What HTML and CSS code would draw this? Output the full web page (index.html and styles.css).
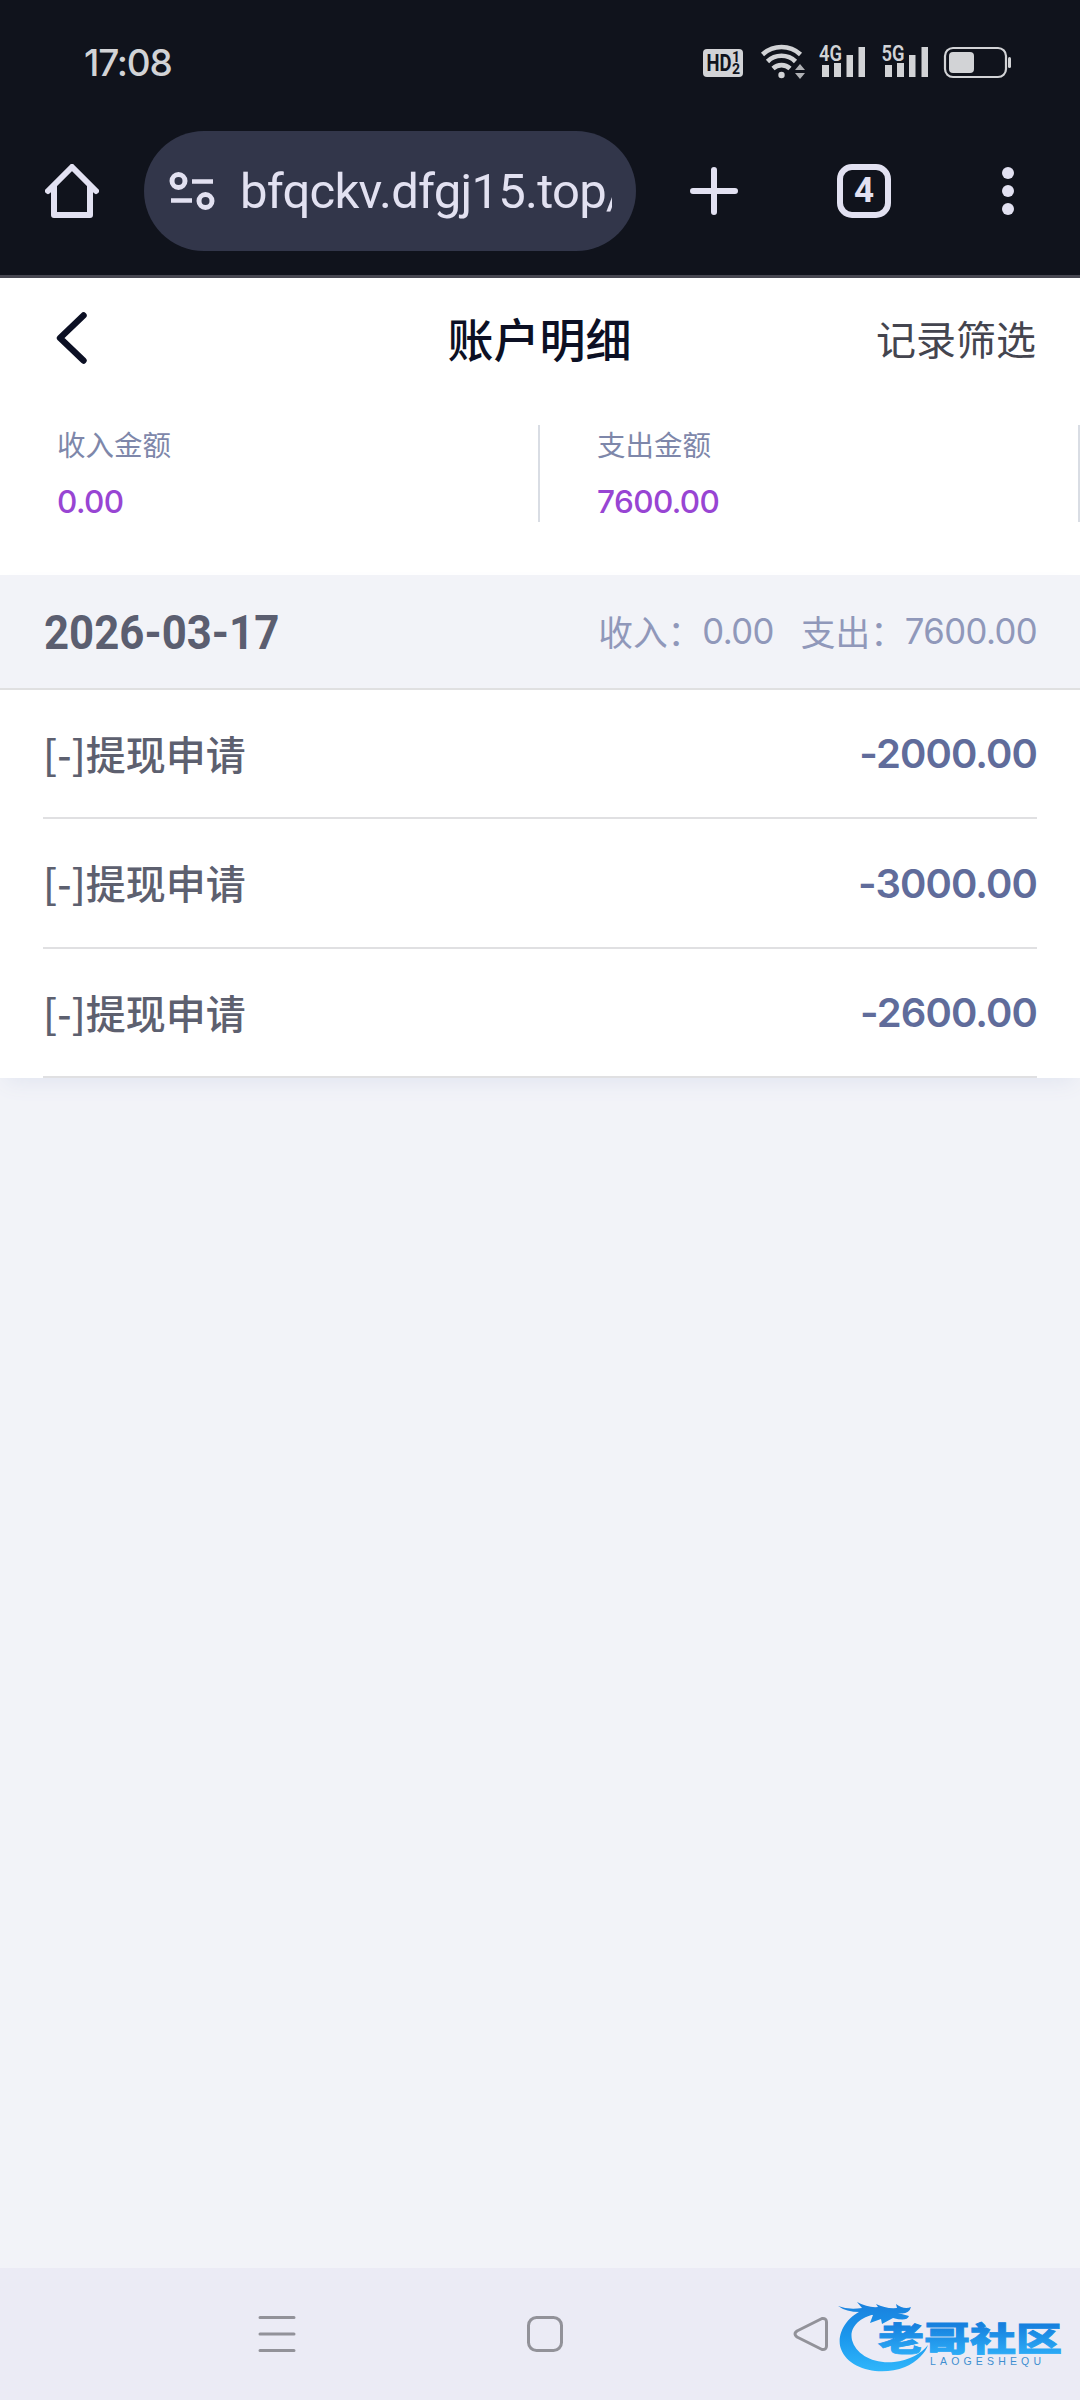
FILE: index.html
```html
<!DOCTYPE html>
<html lang="zh-CN">
<head>
<meta charset="utf-8">
<title>账户明细</title>
<link rel="stylesheet" href="styles.css">
</head>
<body>
<div class="screen">
  <header class="chrome">
    <div class="status">
      <span class="time">17:08</span>
      <svg class="status-icons" width="312" height="44" viewBox="700 40 312 44" fill="#d2d3d6">
        <rect x="703" y="49" width="40" height="28" rx="4"/>
        <text x="706.500" y="71" font-size="23" font-weight="700" textLength="25" lengthAdjust="spacingAndGlyphs" fill="#10131c">HD</text>
        <text x="732" y="62" font-size="14" font-weight="700" fill="#10131c">1</text>
        <text x="732" y="74" font-size="14" font-weight="700" fill="#10131c">2</text>
        <g fill="none" stroke="#d2d3d6" stroke-width="4.600">
          <path d="M762.500 54.500a28 28 0 0 1 38 0"/>
          <path d="M767.500 61.500a20 20 0 0 1 28 0"/>
          <path d="M773 68.500a12.500 12.500 0 0 1 17 0"/>
        </g>
        <circle cx="781.500" cy="75" r="3.200"/>
        <path d="M795 70l5-6 5 6zM795 73l5 6 5-6z" fill="#b0b1b5"/>
        <text x="819" y="61" font-size="22" font-weight="600" textLength="23" lengthAdjust="spacingAndGlyphs">4G</text>
        <path d="M822 65h7v12h-7zM834 63h7v14h-7zM846.500 55h6.500v22h-6.500zM858.500 47h6.500v30h-6.500z"/>
        <text x="881.500" y="61" font-size="22" font-weight="600" textLength="23" lengthAdjust="spacingAndGlyphs">5G</text>
        <path d="M885 65h7v12h-7zM897 63h7v14h-7zM909 55h6.500v22h-6.500zM921.500 47h6.500v30h-6.500z"/>
        <rect x="945" y="48" width="61" height="29" rx="8" fill="none" stroke="#d2d3d6" stroke-width="2.200"/>
        <rect x="949" y="52" width="25" height="21" rx="4"/>
        <rect x="1008" y="57" width="3" height="11" rx="1.500"/>
      </svg>
    </div>
    <div class="toolbar">
      <svg class="home" width="54" height="54" viewBox="45 164 54 54" fill="none" stroke="#e2e1f1" stroke-width="6" stroke-linejoin="round" stroke-linecap="round"><path d="M48 191L72 167L96 191M54 186V215H90V186"/></svg>
      <div class="address">
        <svg width="46" height="40" viewBox="169 171 46 40" fill="none" stroke="#e2e1f1"><g stroke-width="5"><circle cx="178.500" cy="181" r="6.500"/><circle cx="205.500" cy="201" r="6.500"/></g><path d="M192 181.500h21M171 200.500h21" stroke-width="4.600"/></svg>
        <div class="url"><span>bfqckv.dfgj15.top/</span></div>
      </div>
      <svg class="plus" width="48" height="48" viewBox="0 0 48 48" stroke="#e2e1f1" stroke-width="6" stroke-linecap="round"><path d="M24 3v42M3 24h42"/></svg>
      <div class="tabs">4</div>
      <svg class="more" width="12" height="48" viewBox="0 0 12 48" fill="#e2e1f1"><circle cx="6" cy="6" r="6"/><circle cx="6" cy="24" r="6"/><circle cx="6" cy="42" r="6"/></svg>
    </div>
  </header>

  <div class="titlebar">
    <svg width="32" height="56" viewBox="56 310 32 56" fill="none" stroke="#0c1024" stroke-width="6.400" stroke-linecap="round" stroke-linejoin="round"><path d="M83.500 315.500L60 338L83.500 360.500"/></svg>
    <h1>账户明细</h1>
    <span class="filter">记录筛选</span>
  </div>

  <section class="summary">
    <div class="sum"><div class="label">收入金额</div><div class="value">0.00</div></div>
    <div class="sum"><div class="label">支出金额</div><div class="value">7600.00</div></div>
  </section>

  <section class="day">
    <div class="day-head">
      <span class="date">2026-03-17</span>
      <span class="totals"><span>收入：</span><span class="num">0.00</span><span class="out">支出：</span><span class="num">7600.00</span></span>
    </div>
    <div class="row"><span>[-]提现申请</span><b>-2000.00</b></div>
    <div class="row mid"><span>[-]提现申请</span><b>-3000.00</b></div>
    <div class="row"><span>[-]提现申请</span><b>-2600.00</b></div>
  </section>

  <nav class="sysnav">
    <svg width="1080" height="132" viewBox="0 2268 1080 132" fill="none" stroke="#929299" stroke-width="3" stroke-linecap="round" stroke-linejoin="round">
      <path d="M260 2317.500h34M260 2334h34M260 2350.500h34"/>
      <rect x="528.500" y="2317.500" width="33" height="33" rx="8"/>
      <path d="M822 2318.500L797 2331Q793 2334 797 2337L822 2349.500Q826.500 2350 826.500 2346V2322Q826.500 2318 822 2318.500Z"/>
    </svg>
    <svg class="mark" width="230" height="84" viewBox="834 2292 230 84">
      <defs><linearGradient id="blue" gradientUnits="userSpaceOnUse" x1="0" y1="2300" x2="0" y2="2371"><stop offset="0" stop-color="#1a7fdc"/><stop offset=".5" stop-color="#1a96ec"/><stop offset="1" stop-color="#2fb6fb"/></linearGradient>
      <linearGradient id="word" gradientUnits="userSpaceOnUse" x1="0" y1="2325" x2="0" y2="2354"><stop offset="0" stop-color="#1680de"/><stop offset="1" stop-color="#2cabf6"/></linearGradient></defs>
      <g fill="url(#blue)">
        <path d="M866 2309C845 2316 836 2336 841 2349C848 2369 880 2377 905 2367C917 2362 926 2352 928 2345C922 2353 908 2361 894 2362C872 2364 856 2354 852 2340C849 2327 860 2316 880 2313Z"/>
        <path d="M838 2306Q848 2310 862 2308L857 2302Q868 2308 878 2307L876 2304Q886 2309 897 2308L896 2304Q904 2310 911 2307Q909 2315 898 2313L909 2316Q907 2322 893 2318L882 2324L881 2319L870 2323L873 2315L860 2312Q846 2312 838 2306Z"/>
      </g>
      <text x="878" y="2351" class="word" font-size="33" textLength="184" lengthAdjust="spacingAndGlyphs" fill="url(#word)" stroke="url(#word)" stroke-width=".8">老哥社区</text>
      <text x="930" y="2365" class="latin" font-size="10.500" textLength="111" fill="#3f8fd0">LAOGESHEQU</text>
    </svg>
  </nav>
</div>
</body>
</html>
```
FILE: styles.css
```css
* { box-sizing: border-box; }
body { margin: 0; background: #f2f3f8; font-family: "Noto Sans", "Noto Sans CJK SC", sans-serif; }
.screen { width: 1080px; height: 2400px; display: flex; flex-direction: column; background: #f2f3f8; overflow: hidden; }
.chrome { height: 278px; background: #10131c; border-bottom: 3px solid #474751; flex: none; }
.status { height: 126px; padding: 40px 68px 0 84px; display: flex; justify-content: space-between; align-items: flex-start; }
.status-icons { font-family: Roboto, sans-serif; }
.time { padding-top: 1px; font: 500 37px/44px Inter, sans-serif; letter-spacing: -1.2px; color: #d2d3d6; }
.toolbar { height: 130px; padding: 0 66px 0 45px; display: flex; align-items: center; }
.address { width: 492px; height: 120px; margin-left: 45px; padding-left: 25px; border-radius: 60px; background: #32364a; display: flex; align-items: center; }
.url { width: 372px; margin-left: 25px; padding-top: 1px; overflow: hidden; white-space: nowrap; color: #e2e1f1; font: 400 49px/64px Roboto, sans-serif; letter-spacing: -.75px; }
.plus { margin-left: 54px; }
.tabs { width: 54px; height: 54px; margin-left: 99px; border: 6px solid #e2e1f1; border-radius: 15px; color: #e2e1f1; font: 700 35px/42px Roboto, sans-serif; text-align: center; }
.more { margin-left: 111px; }

.titlebar { height: 122px; padding: 0 44px 2px 56px; background: #fff; display: grid; grid-template-columns: 160px 1fr 173px; align-items: center; flex: none; }
.titlebar h1 { margin: 0 0 2px; text-align: center; font-size: 46px; line-height: 60px; font-weight: 500; color: #0c1024; font-family: "Noto Sans CJK SC", sans-serif; }
.filter { text-align: right; font: 400 40px/60px "Noto Sans CJK SC", sans-serif; color: #44454f; }
.summary { height: 175px; padding-top: 25px; background: #fff; display: flex; flex: none; }
.sum { width: 540px; height: 97px; padding-left: 57px; border-right: 2px solid #d9dde4; }
.label { height: 39px; font: 400 28.5px/38px "Noto Sans CJK SC", sans-serif; color: #7e87aa; }
.value { margin-top: 18px; font: 500 31.5px/40px Inter, "Noto Sans", sans-serif; letter-spacing: -.6px; color: #9845d3; }

.day { height: 503px; background: #fff; box-shadow: 0 10px 20px -6px #e1e5f0; flex: none; }
.day-head { height: 115px; padding: 0 43px 2px 44px; background: #f2f3f8; border-bottom: 2px solid #e0e0e1; display: flex; align-items: center; justify-content: space-between; }
.date { padding-top: 4px; font: 700 49px/60px Roboto, sans-serif; color: #5b5e70; transform: scaleX(.893); transform-origin: left; }
.totals { display: flex; align-items: center; color: #9098ba; font: 400 34.7px/50px "Noto Sans CJK SC", sans-serif; }
.num { font-family: Inter, sans-serif; letter-spacing: -.6px; padding-top: 1px; }
.out { margin-left: 27px; }
.row { height: 129px; margin: 0 43px; border-bottom: 2px solid #e0e0e2; display: flex; align-items: center; justify-content: space-between; color: #5d606f; font: 500 40px/60px "Noto Sans CJK SC", sans-serif; }
.row.mid { height: 130px; }
.row span { padding-bottom: 2px; }
.row b { padding-top: 1px; font: 600 40px/60px Inter, sans-serif; letter-spacing: -.9px; color: #606c9b; }

.sysnav { position: relative; height: 132px; margin-top: auto; background: #ebebf5; flex: none; }
.sysnav > svg { display: block; }
.sysnav .mark { position: absolute; left: 834px; top: 24px; }
.word { font-family: "Noto Sans CJK SC", sans-serif; font-weight: 900; }
.latin { font-family: "Liberation Sans", sans-serif; }
```
